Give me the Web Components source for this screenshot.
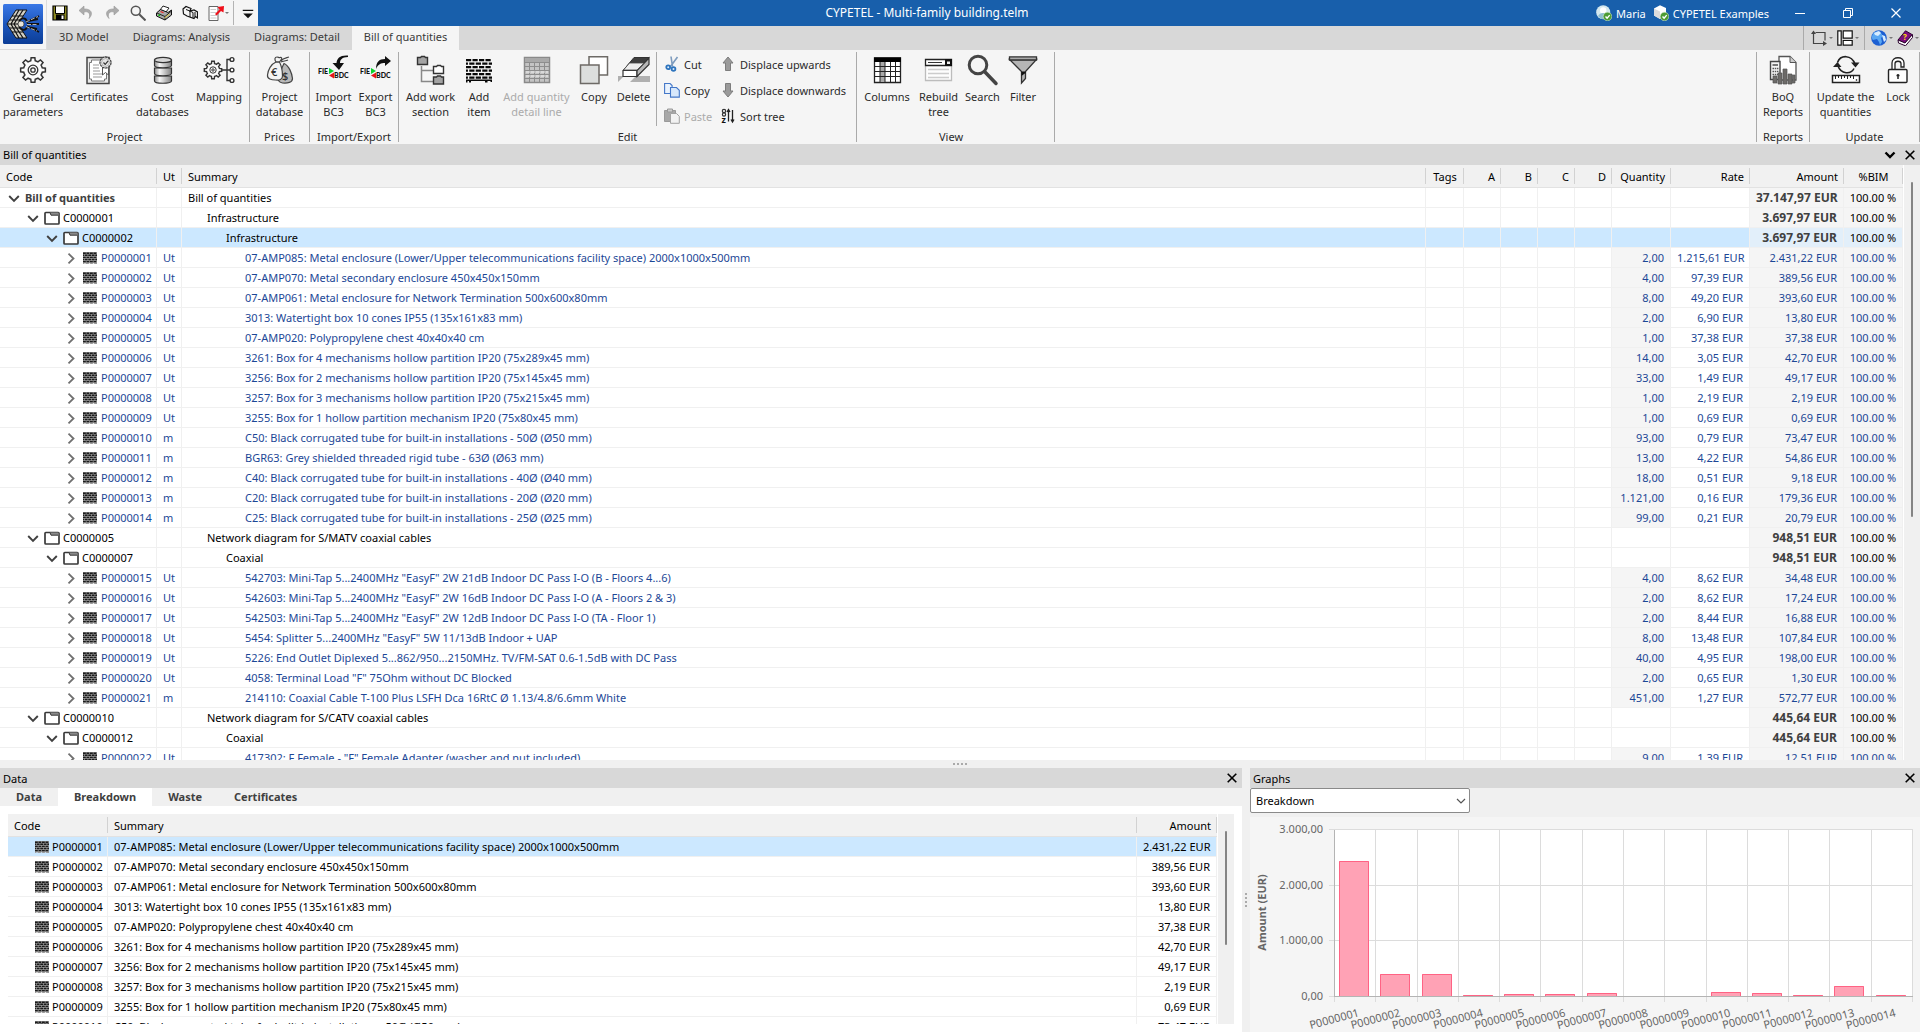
<!DOCTYPE html>
<html lang="en">
<head>
<meta charset="utf-8">
<title>CYPETEL - Multi-family building.telm</title>
<style>
html, body { margin: 0; height: 100%; }
body { font: 11px/15px "Noto Sans", "Open Sans", sans-serif; color: #000; overflow: hidden; }
</style>
</head>
<body>
<cy-app></cy-app>

<script>
const RESET = `
  *, *::before, *::after { box-sizing: border-box; }
  button { font: inherit; color: inherit; border: 0; padding: 0; margin: 0; background: none; text-align: inherit; }
`;

class CyElement extends HTMLElement {
  constructor() {
    super();
    this.attachShadow({ mode: 'open' });
  }
  connectedCallback() {
    this.shadowRoot.innerHTML = `<style>${RESET}${this.styles()}</style>${this.markup()}`;
    this.ready();
  }
  styles() { return ''; }
  markup() { return '<slot></slot>'; }
  ready() {}
}

/* ---------- icons ---------- */

function gear(cx, cy, outer, inner, teeth) {
  const step = Math.PI * 2 / teeth;
  let d = '';
  for (let i = 0; i < teeth; i++) {
    const a = i * step - Math.PI / 2;
    [[-0.3, inner], [-0.19, outer], [0.19, outer], [0.3, inner]].forEach(([k, r], j) => {
      const x = (cx + Math.cos(a + k * step) * r).toFixed(2);
      const y = (cy + Math.sin(a + k * step) * r).toFixed(2);
      d += j === 0 && i > 0 ? `A${inner} ${inner} 0 0 1 ${x} ${y}` : `${d ? 'L' : 'M'}${x} ${y}`;
    });
  }
  return d + 'Z';
}

function bricks(x, y, w, h, rows, cols, gap) {
  const rowH = h / rows, colW = w / cols;
  let d = '';
  for (let r = 0; r < rows; r++) {
    const shift = r % 2 ? colW / 2 : 0;
    for (let c = -1; c <= cols; c++) {
      const x0 = Math.max(x, x + c * colW + shift);
      const x1 = Math.min(x + w, x + (c + 1) * colW + shift - gap);
      if (x1 > x0) d += `M${x0} ${y + r * rowH}H${x1}V${y + (r + 1) * rowH - gap}H${x0}Z`;
    }
  }
  return d;
}

const fieLogo = `
  <g font-family="Lato, sans-serif" font-weight="900" font-size="7" fill="#111">
    <text x="0" y="20">FIE</text><text x="16" y="24">BDC</text>
  </g>
  <path d="M11 14l5 3-5 3z" fill="#0bd32a"/><path d="M16 18.500l-5 3 5 3z" fill="#e8121a"/>`;

const ICONS = {
  gear: ['0 0 32 32', `<g fill="none" stroke="#333" stroke-width="1.500"><path fill="#fbfbfb" d="${gear(16, 16, 12.5, 9.5, 8)}"/><circle cx="16" cy="16" r="4.800" stroke-width="1.300"/><circle cx="16" cy="16" r="2.200" stroke-width="1.300"/></g>`],
  certificate: ['0 0 32 32', `<path d="M4 3.500h22v26H4z" fill="#e9e9e9" stroke="#444" stroke-width="1.500"/><path d="M8.500 6h13v2.500h2V25h-2v2h-13v-2h-2V8.500h2z" fill="#fff" stroke="#777"/><path d="M10 11h6M10 14h6M10 17h7M10 20h9M10 23h9" stroke="#999"/><path d="M19.500 12v9l3-2.500 3 2.500v-9z" fill="#fff" stroke="#555"/><circle cx="22.500" cy="8.500" r="5.500" fill="#fff" stroke="#444" stroke-width="1.300" stroke-dasharray="2.500 .6"/><circle cx="22.500" cy="8.500" r="4" fill="#e4e4e4" stroke="#888" stroke-width=".6"/><path d="M20.500 8.500l1.700 1.800 3-3.500" fill="none" stroke="#333" stroke-width="1.200"/>`],
  database: ['0 0 32 32', `<defs><linearGradient id="g"><stop offset="0" stop-color="#8e8e8e"/><stop offset=".3" stop-color="#f6f6f6"/><stop offset="1" stop-color="#828282"/></linearGradient></defs><g stroke="#333" stroke-width="1.200"><path d="M7.500 22v5c0 3 17 3 17 0v-5z" fill="url(#g)"/><path d="M7.500 14v5.500c0 3 17 3 17 0V14z" fill="url(#g)"/><path d="M7.500 6v5.500c0 3 17 3 17 0V6z" fill="url(#g)"/><ellipse cx="16" cy="6" rx="8.500" ry="2.600" fill="#d6d6d6"/></g>`],
  mapping: ['0 0 32 32', `<g fill="none" stroke="#333" stroke-width="1.400"><path fill="#fbfbfb" d="${gear(10, 16, 8.8, 6.6, 8)}"/><circle cx="10" cy="16" r="3.200" stroke-width="1"/><circle cx="10" cy="16" r="1.200" stroke-width="1"/><path d="M19 16h8M29 5.500h-5v21h4"/><g fill="#fff"><circle cx="29" cy="5.500" r="1.900"/><circle cx="29" cy="16" r="1.900"/><circle cx="29" cy="26.500" r="1.900"/></g></g>`],
  money: ['0 0 32 32', `<g stroke="#444" stroke-width="1.200"><path d="M20 9.500c5 2 8 10 8.500 15 0 4-5 5-10 4.500-4-1-5-3-4-6 2-5 3-9 5.500-13.500z" fill="#b9b9b9"/><path d="M12 8c-5 2-8 8-8.500 13-.5 4 4 5 8 5 4 .5 7-.5 7-4 0-5-1-10-3-14z" fill="#f4f4f4"/><path d="M12 8c-2-3-1-5 1-5 1.500 0 2 1 3 .5 1.500-.5 2.500 1 1 2.500l-1.500 2zM17 7c2-3 5-3 8-4M17 8c2-1 5-1 7-2" fill="none"/></g><g font-family="Open Sans, sans-serif" font-weight="600" fill="#333"><text x="7" y="22" font-size="11">€</text><text x="18" y="26" font-size="11">$</text></g>`],
  importbc3: ['0 0 32 32', `<path d="M30 1.500C22 1 19 4 18.500 9h-4l6.500 7 5-7h-4C22 6 24 3 30 3z" fill="#111"/>${fieLogo}`],
  exportbc3: ['0 0 32 32', `<path d="M16 15c0-7 3-10 9-10V2l6 5-6 5V9c-4 0-7 1-9 6z" fill="#111"/>${fieLogo}`],
  worksection: ['0 0 32 32', `<path d="M6.500 12v15.500H18M6.500 16.500H18" fill="none" stroke="#888" stroke-width="1.500"/><g stroke="#333" stroke-width="1.400"><path d="M2.500 3.500h3l1-1h3l1 1h2v7h-10z" fill="#a3a3a3"/><path d="M18.500 12.500h3l1-1h3l1 1h2v7h-10z" fill="#fff"/><path d="M18.500 23h3l1-1h3l1 1h2v7h-10z" fill="#a3a3a3"/></g>`],
  bricks: ['0 0 32 32', `<path fill="#080808" d="${bricks(3, 5, 26, 21, 6, 4, 1.3)}M3 25.500h26V28h-1.500v-1h-3v1.500H22V27H8v1.500H6V27H4.500v1.500H3z"/>`],
  detailline: ['0 0 32 32', `<path d="M3.500 3.500h25v25h-25z" fill="#c4c4c4" stroke="#8a8a8a" stroke-width="1.500"/><path d="M4 4h24v4H4z" fill="#a9a9a9"/><path d="M4 8.500h24M4 12.500h24M4 16.500h24M4 20.500h24M4 24.500h24M8.500 9v19M13.500 9v19M18.500 9v19M23.500 9v19" stroke="#8d8d8d"/><path d="M5 18h22M5 22h22" stroke="#eee" stroke-dasharray="4 1"/>`],
  copybig: ['0 0 32 32', `<g stroke="#6d6a66" stroke-width="1.500"><path d="M11 2.800h18.500V21H11z" fill="#fff"/><path d="M2.500 11H21v18.500H2.500z" fill="#dcdedd"/></g>`],
  eraser: ['0 0 32 32', `<path d="M0 22h6l-6 6zM18 22h14v6H12z" fill="#b0b0b0"/><path d="M5.500 16L16 3.500h15L19 16z" fill="#3f3f3f" stroke="#333"/><path d="M5 16.500h14v6H5z" fill="#fff" stroke="#333" stroke-width="1.200"/><path d="M19 16.500L31 4v6.500l-12 12z" fill="#b7b7b7" stroke="#333" stroke-width="1.200"/><path d="M5.500 16l6-7H26l-7 7z" fill="#eee" stroke="#444" stroke-width=".8"/>`],
  columns: ['0 0 32 32', `<path d="M3.500 4h26v24.500h-26z" fill="#fff" stroke="#222" stroke-width="1.300"/><path d="M3 3.500h27V8H3z" fill="#000"/><path d="M9 8h5v20H9z" fill="#aaa"/><path d="M3 12.500h27M3 17.500h27M3 22.500h27M9 8v20M14 8v20M19.500 8v20M24.500 8v20" stroke="#222"/>`],
  rebuild: ['0 0 32 32', `<path d="M2.500 12v14.500h26V12" fill="#fdfdfd" stroke="#bcbcbc" stroke-width="1.300"/><path d="M5 15.500h21M5 19.500h21M5 23.500h21" stroke="#ccc" stroke-width="1.300"/><path d="M2.500 5.500h26v6h-26z" fill="#fff" stroke="#222" stroke-width="1.300"/><path d="M22 5h7v7h-7z" fill="#111"/><path d="M5 8.500h14" stroke="#333"/><path d="M24 7.500h3v2.500h-3z" fill="#eee"/>`],
  searchbig: ['0 0 32 32', `<circle cx="11" cy="11" r="8.800" fill="none" stroke="#444" stroke-width="3"/><path d="M17.500 17.500L29 29.500" stroke="#444" stroke-width="3.500" stroke-linecap="round"/>`],
  filter: ['0 0 32 32', `<path d="M2.500 5.500h27L18.500 17.500v7l-4 4.500V17.500z" fill="#b5b5b5" stroke="#333" stroke-width="1.300"/><path d="M2.500 2.800h27v3.200h-27z" fill="#aaa" stroke="#333" stroke-width="1.300"/><path d="M14.500 17.500h4v1.500l-4 3z" fill="#111"/>`],
  reports: ['0 0 32 32', `<path d="M12 2.500h11l6 6V26H12z" fill="#fff" stroke="#555" stroke-width="1.300"/><path d="M23 2.500v6h6" fill="#ccc" stroke="#555"/><path d="M3.500 7.500h9.500v18H3.500z" fill="#f4f4f4" stroke="#444" stroke-width="1.400"/><path d="M5.500 10h5.500v2H5.500z" fill="#777"/><path d="M5.500 14.500h6M5.500 17.500h6M5.500 20.500h6" stroke="#555" stroke-width="1.500" stroke-dasharray="1.500 .7"/><g fill="#6c6a68" stroke="#555" stroke-width=".7"><path d="M6 22h4v7H6zM11 19h4v11h-4zM16 15h4v15h-4zM21 20h4v10h-4zM25.500 21h2.500v8h-2.500z"/></g>`],
  update: ['0 0 32 32', `<g fill="none" stroke="#222" stroke-width="1.600"><path d="M7.500 8.500c3-8 14-8 17.500 1.500M24 14.500c-3 6-13 6-16-2.500"/></g><path d="M21 8.500h8.500l-4 5zM3 13h8.500l-4-5z" fill="#222"/><path d="M2.500 21.500h27v7h-27z" fill="#fff" stroke="#222" stroke-width="1.500"/><path d="M5.500 22v3M8.500 22v2M11.500 22v3M14.500 22v2M17.500 22v3M20.500 22v2M23.500 22v3" stroke="#222"/><circle cx="26.500" cy="26" r=".8"/>`],
  lock: ['0 0 32 32', `<path d="M10 15.500V9c0-7 12-7 12 0v4h-3V9.500c0-3-6-3-6 0v6" fill="#fff" stroke="#222" stroke-width="1.300"/><rect x="6.500" y="15.500" width="18.500" height="13" rx="1" fill="#fff" stroke="#222" stroke-width="1.400"/><path d="M16 20v5M14.500 21.500h3" stroke="#222" stroke-width="1.500"/>`],
  cut: ['0 0 16 16', `<path d="M13.500 1L6.500 10.500M7 .5l1.500 10" stroke="#7d9bbd" stroke-width="1.600"/><g fill="#dcebfa" stroke="#2e74bd" stroke-width="1.800"><circle cx="4.200" cy="11.200" r="1.900"/><circle cx="9.500" cy="13" r="1.900"/></g>`],
  copy: ['0 0 16 16', `<g fill="#eaf3fd" stroke="#4377c8" stroke-width="1.100"><path d="M.6 1.500h5.500l2 2v8H.6z"/><path d="M6.500 5.500h6l2.800 2.800v6.800H6.500z" fill="#d7e8fb"/></g>`],
  paste: ['0 0 16 16', `<path d="M.5 2.500h11v11H.5z" fill="#a8a8a8" stroke="#9a9a9a"/><path d="M3.500 1h5v3h-5z" fill="#ccc" stroke="#999"/><path d="M6.500 5.500h6l2.800 2.800v7H6.500z" fill="#f2f2f2" stroke="#a2a2a2"/>`],
  up: ['0 0 16 16', `<path d="M8 1l5 6h-2.500v7.500h-5V7H3z" fill="#9a9a9a" stroke="#7d7d7d"/>`],
  down: ['0 0 16 16', `<path d="M8 15l5-6h-2.500V1.500h-5V9H3z" fill="#9a9a9a" stroke="#7d7d7d"/>`],
  sort: ['0 0 16 16', `<g fill="none" stroke="#333" stroke-width="1.200"><circle cx="4" cy="3" r="1.700"/><circle cx="4" cy="6.500" r="1.600"/></g><text x="1.500" y="15" font-family="Open Sans, sans-serif" font-weight="700" font-size="9" fill="#111">z</text><path d="M8.500 2v11.500M7 4l1.500-2.500L10 4M12.500 2v11.500M11 11.500l1.500 2.500 1.500-2.500" fill="none" stroke="#222" stroke-width="1.300"/>`],
  save: ['0 0 16 16', `<path d="M1 1h14v14H1z" fill="#8a8720" stroke="#000" stroke-width="1.200"/><path d="M4 1.500h8V8H4z" fill="#fff"/><path d="M4 9.500h8.500V15H4z" fill="#000"/><path d="M9.500 10.500h2V14h-2z" fill="#fff"/><path d="M3.500 1v7.500h9V1" fill="none" stroke="#000"/>`],
  undo: ['0 0 16 16', `<path d="M6 1L1 5.500 6 10V7c4-1 7 1 5 6.500 5-5 2-10-5-9.500z" fill="#ababab" stroke="#999" stroke-width=".6"/>`],
  redo: ['0 0 16 16', `<path d="M10 1l5 4.500L10 10V7C6 6 3 8 5 13.500 0 8.500 3 3.500 10 4z" fill="#ababab" stroke="#999" stroke-width=".6"/>`],
  search: ['0 0 16 16', `<circle cx="5.800" cy="5.800" r="4.500" fill="none" stroke="#555" stroke-width="1.500"/><path d="M9.200 9.200L15.500 15.500" stroke="#555" stroke-width="2"/>`],
  print: ['0 0 16 16', `<path d="M4 5l3-4 6 2-3 4z" fill="#fff" stroke="#222"/><path d="M.5 8l4-3.500L12 7.500 15.500 5v5L9 15 .5 11z" fill="#a8a8a8" stroke="#111"/><path d="M.8 8L9 11.500 15.500 6M9 11.500V15" fill="none" stroke="#222"/><path d="M2.500 10l1.500.6" stroke="#0c0" stroke-width="1.500"/><path d="M4.500 6.500l3 1.200" stroke="#e22" stroke-width="1.200"/><path d="M8.500 13l5-4" stroke="#e8d64a"/>`],
  printsetup: ['0 0 16 16', `<path d="M1 4l3-2.500 5 2L8 6l4-1 3.500 2v6l-2-1.500-1.500 2L5 11 1.500 9z" fill="#f4f4f4" stroke="#111" stroke-width="1.200"/><path d="M8 6v6M4 4.500L8 6l3 1.500V13M13 7v5" stroke="#111" fill="none"/>`],
  exportdoc: ['0 0 16 16', `<path d="M1 1.500h9v14H1z" fill="#fff" stroke="#666"/><path d="M2.500 4.500H8M2.500 7.500h6M2.500 10.500h6M2.500 13h6" stroke="#ccc"/><path d="M7 9l4.500-4.500L9.500 2l6.500-1-.5 6.500L13 6 8.500 10.500z" fill="#f0101a"/>`],
  customize: ['0 0 16 16', `<path d="M2 5h12" stroke="#111" stroke-width="1.400"/><path d="M2.500 8.500h11L8 14z" fill="#111"/>`],
  caret: ['0 0 4 4', `<path d="M0 1h4L2 3z" fill="#777"/>`],
  frame: ['0 0 16 16', `<path d="M2.500 2v11.500H14M4.500 2.500h9.500v8" fill="none" stroke="#444" stroke-width="1.200"/><path d="M0 4L2.500.5 5 4zM12 11l4 2.500L12 16z" fill="#444"/>`],
  layout: ['0 0 16 16', `<g fill="#fff" stroke="#111" stroke-width="1.200"><path d="M.8.8h3.400v14.400H.8zM6.200.8h9v7.400h-9zM6.200 10.500h9v4.700h-9z"/></g>`],
  globe: ['0 0 16 16', `<circle cx="8" cy="8" r="7.800" fill="#1c5fd2"/><path d="M4 2C1 4 0 8 2 10l4-1 2 3 1 3 2-3-1-4 2-2-2-3-3-2z" fill="#5aa7f2"/><path d="M3 3l5-2 2 2-3 3-3-1zM11 5l3 1 1 4-2 2-1-3z" fill="#d7ecff"/>`],
  book: ['0 0 16 16', `<path d="M1 10L8.500.8 15 4.500 8 13z" fill="#7d0e7c" stroke="#2c0430"/><path d="M1 10l7 3 7.500-8.500v3L8.500 15.800 1.500 13z" fill="#fff" stroke="#2c0430"/><text x="6" y="10" font-family="Open Sans, sans-serif" font-weight="700" font-size="8" fill="#ffe100">?</text>`],
  user: ['0 0 16 16', `<circle cx="7.200" cy="7.200" r="7" fill="#d4e8ee"/><circle cx="7.200" cy="5.500" r="3.200" fill="#fff"/><path d="M2 11c2-4 8-4 10 0l-3 3H5z" fill="#8fbfd0"/><circle cx="11.500" cy="11.500" r="4.300" fill="#4d9c34" stroke="#d5e8ce" stroke-width=".6"/><path d="M9.500 11.500l1.600 1.600 2.600-3" fill="none" stroke="#fff" stroke-width="1.400"/>`],
  box: ['0 0 16 16', `<path d="M7 .3l6 2.600v7L7 14 1 10.500v-7z" fill="#fff"/><path d="M1 3.500L7 6.500V14l-6-3.500z" fill="#dcdcdc"/><circle cx="11.500" cy="11.500" r="4.300" fill="#4d9c34" stroke="#d5e8ce" stroke-width=".6"/><path d="M9.500 11.500l1.600 1.600 2.600-3" fill="none" stroke="#fff" stroke-width="1.400"/>`],
  minimize: ['0 0 10 10', `<path d="M0 5.500h10" stroke="#fff"/>`],
  restore: ['0 0 10 10', `<path d="M.5 2.500h7v7h-7zM2.500 2.500v-2h7v7h-2" fill="none" stroke="#fff"/>`],
  closewin: ['0 0 10 10', `<path d="M.5.5l9 9M9.500.5l-9 9" stroke="#fff" stroke-width="1.200"/>`],
  close: ['0 0 10 10', `<path d="M.7.7l8.600 8.600M9.300.7L.7 9.300" stroke="#000" stroke-width="1.600"/>`],
  menu: ['0 0 12 12', `<path d="M1.500 3.500L6 8l4.500-4.500" fill="none" stroke="#000" stroke-width="2.400"/>`],
  expanded: ['0 0 12 12', `<path d="M1.200 4L6 8.800 10.800 4" fill="none" stroke="#404040" stroke-width="1.900"/>`],
  collapsed: ['0 0 12 12', `<path d="M3.500 1.700L8.500 6.500l-5 4.800" fill="none" stroke="#707070" stroke-width="1.800"/>`],
  folder: ['0 0 16 14', `<rect x="1" y="1.500" width="14" height="11.500" rx=".8" fill="#fff" stroke="#3a3a3a" stroke-width="1.700"/><path d="M6 1.500l1 2.700h7.500V1.500z" fill="#8a8a8a"/><path d="M6 1.500l1 2.700h7" fill="none" stroke="#3a3a3a"/>`],
  item: ['0 0 14 12', `<path d="M0 0h14v12h-2.500l-1-1-1 1h-2l-1-1-1 1H3l-1-1-1 1H0z" fill="#9a9a9a"/><path fill="#1b1b1b" d="${bricks(0, 0.5, 14, 10.5, 5, 4, 0.7)}"/>`],
  select: ['0 0 10 10', `<path d="M1 3l4 4 4-4" fill="none" stroke="#555" stroke-width="1.200"/>`],
  app: ['0 0 40 40', `<defs><linearGradient id="a" x2="0" y2="1"><stop offset="0" stop-color="#3a78e6"/><stop offset=".5" stop-color="#1c56bd"/><stop offset="1" stop-color="#0c3d96"/></linearGradient></defs><rect width="40" height="40" rx="1.500" fill="url(#a)"/><path d="M13 6h11l-9 14 9 14H13L4 20z" fill="#d3d0c4" stroke="#111"/><path d="M9 12h11M7 16h11M5 20h10M7 24h11M9 28h11M16 6L8 20l8 14M20 6l-9 14 9 14" fill="none" stroke="#111" stroke-width="1.200"/><path d="M16 19c1-6 7-6 8-1l12-6M24 20h12M24 22l12 6M25 17l10-2M25 23l9 2M16 21c1 6 7 6 8 2" fill="none" stroke="#111" stroke-width="1.800"/><path d="M23 18l12-5.500M24 20.500h11M23 22.500l11 4.500" stroke="#ddd" stroke-width=".8" stroke-dasharray="4 1.500"/><circle cx="18" cy="20" r="3" fill="#e6e3d8" stroke="#333" stroke-width=".7"/>`],
};

customElements.define('cy-icon', class extends CyElement {
  styles() {
    const size = this.getAttribute('size') || '16';
    return `:host { display: inline-block; flex: none; width: ${size}px; } svg { display: block; width: 100%; height: auto; }`;
  }
  markup() {
    const [box, art] = ICONS[this.getAttribute('name')];
    return `<svg viewBox="${box}" aria-hidden="true">${art}</svg>`;
  }
});

/* ---------- title bar ---------- */

customElements.define('cy-title-bar', class extends CyElement {
  styles() {
    return `
      :host { display: flex; height: 26px; background: #185fab; color: #fff; }
      .quick { display: flex; align-items: center; width: 211px; background: #f5f5f5; }
      .quick button { width: 26px; height: 26px; display: grid; place-items: center; }
      .quick .last { display: flex; width: 30px; gap: 1px; padding-left: 5px; align-items: center; }
      .quick .sep { width: 1px; height: 24px; margin-right: 4px; background: #b4b4b4; }
      .quick .more { width: 20px; }
      h1 { flex: 1; margin: 0; font-size: 12px; font-weight: 400; line-height: 26px; text-align: center; white-space: nowrap; }
      .account { display: flex; align-items: center; gap: 4px; margin-right: 7px; }
      .win { display: flex; }
      .win button { width: 48px; height: 26px; display: grid; place-items: center; }
    `;
  }
  markup() {
    const quick = [['save', 'Save'], ['undo', 'Undo'], ['redo', 'Redo'], ['search', 'Search'], ['print', 'Print'], ['printsetup', 'Print setup']];
    return `
      <div class="quick">
        ${quick.map(([n, l]) => `<button aria-label="${l}"><cy-icon name="${n}"></cy-icon></button>`).join('')}
        <button class="last" aria-label="Export"><cy-icon name="exportdoc"></cy-icon><cy-icon name="caret" size="4"></cy-icon></button>
        <span class="sep"></span>
        <button class="more" aria-label="Customize"><cy-icon name="customize" size="14"></cy-icon></button>
      </div>
      <h1>CYPETEL - Multi-family building.telm</h1>
      <button class="account"><cy-icon name="user"></cy-icon>Maria</button>
      <button class="account"><cy-icon name="box"></cy-icon>CYPETEL Examples</button>
      <div class="win">
        <button aria-label="Minimize"><cy-icon name="minimize" size="10"></cy-icon></button>
        <button aria-label="Restore"><cy-icon name="restore" size="10"></cy-icon></button>
        <button aria-label="Close"><cy-icon name="closewin" size="10"></cy-icon></button>
      </div>`;
  }
});

/* ---------- ribbon ---------- */

customElements.define('cy-ribbon-tabs', class extends CyElement {
  styles() {
    return `
      :host { display: flex; height: 24px; background: #d8d8d8; color: #3a3a3a; }
      [role=tablist] { display: flex; flex: 1; }
      [role=tab] { padding: 0 12px 4px; white-space: nowrap; }
      [role=tab][aria-selected=true] { background: #f5f5f5; }
      .tools { display: flex; align-items: center; gap: 4px; border-left: 1px solid #aaa; padding: 0 5px 0 7px; }
      .tools:last-child { padding: 0 1px 0 6px; }
      .tools button { display: flex; align-items: center; gap: 2px; width: 22px; }
    `;
  }
  markup() {
    const tabs = ['3D Model', 'Diagrams: Analysis', 'Diagrams: Detail', 'Bill of quantities'];
    const tool = (n, l) => `<button aria-label="${l}"><cy-icon name="${n}"></cy-icon><cy-icon name="caret" size="4"></cy-icon></button>`;
    return `
      <div role="tablist">${tabs.map((t, i) => `<button role="tab" aria-selected="${i === 3}">${t}</button>`).join('')}</div>
      <div class="tools">${tool('frame', 'Frame')}${tool('layout', 'Layout')}</div>
      <div class="tools">${tool('globe', 'Web')}${tool('book', 'Help')}</div>`;
  }
});

customElements.define('cy-ribbon-group', class extends CyElement {
  styles() {
    return `
      :host { display: flex; flex-direction: column; padding: 0 3px 0 2px; background: linear-gradient(#aaa, #aaa) right 1px / 1px 90px no-repeat; }
      .body { display: flex; flex: 1; align-items: flex-start; }
      .title { text-align: center; line-height: 14px; white-space: nowrap; }
    `;
  }
  markup() { return `<div class="body"><slot></slot></div><div class="title">${this.getAttribute('label')}</div>`; }
});

customElements.define('cy-ribbon-button', class extends CyElement {
  styles() {
    return `
      :host { display: block; width: ${this.getAttribute('width')}px; }
      button { display: flex; flex-direction: column; align-items: center; width: 100%; padding-top: 3px; gap: 3px; text-align: center; white-space: pre; }
      button:disabled { color: #ababab; }
    `;
  }
  markup() {
    return `<button ${this.hasAttribute('disabled') ? 'disabled' : ''}><cy-icon name="${this.getAttribute('icon')}" size="32"></cy-icon><span><slot></slot></span></button>`;
  }
});

customElements.define('cy-ribbon-item', class extends CyElement {
  styles() {
    return `
      :host { display: block; }
      button { display: flex; align-items: center; gap: 4px; height: 26px; white-space: nowrap; }
      button:disabled { color: #ababab; }
    `;
  }
  markup() {
    return `<button ${this.hasAttribute('disabled') ? 'disabled' : ''}><cy-icon name="${this.getAttribute('icon')}"></cy-icon><slot></slot></button>`;
  }
});

customElements.define('cy-ribbon', class extends CyElement {
  styles() {
    return `
      :host { display: flex; height: 94px; padding-top: 1px; background: #f5f5f5; color: #2b2b2b; }
      .spacer { flex: 1; background: linear-gradient(#aaa, #aaa) right 1px / 1px 90px no-repeat; }
      .divider { width: 1px; height: 74px; margin: 1px 7px 0 2px; background: #aaa; }
      .stack { display: flex; flex-direction: column; width: 56px; }
      .stack + .stack { width: 134px; }
      .view { padding-right: 12px; }
    `;
  }
  markup() {
    const b = (icon, width, label, extra = '') => `<cy-ribbon-button icon="${icon}" width="${width}" ${extra}>${label}</cy-ribbon-button>`;
    return `
      <cy-ribbon-group label="Project">
        ${b('gear', 62, 'General\nparameters')}${b('certificate', 70, 'Certificates')}${b('database', 57, 'Cost\ndatabases')}${b('mapping', 56, 'Mapping')}
      </cy-ribbon-group>
      <cy-ribbon-group label="Prices">${b('money', 55, 'Project\ndatabase')}</cy-ribbon-group>
      <cy-ribbon-group label="Import/Export">${b('importbc3', 43, 'Import\nBC3')}${b('exportbc3', 41, 'Export\nBC3')}</cy-ribbon-group>
      <cy-ribbon-group label="Edit">
        ${b('worksection', 59, 'Add work\nsection')}${b('bricks', 38, 'Add\nitem')}${b('detailline', 77, 'Add quantity\ndetail line', 'disabled')}${b('copybig', 38, 'Copy')}${b('eraser', 41, 'Delete')}
        <div class="divider"></div>
        <div class="stack">
          <cy-ribbon-item icon="cut">Cut</cy-ribbon-item>
          <cy-ribbon-item icon="copy">Copy</cy-ribbon-item>
          <cy-ribbon-item icon="paste" disabled>Paste</cy-ribbon-item>
        </div>
        <div class="stack">
          <cy-ribbon-item icon="up">Displace upwards</cy-ribbon-item>
          <cy-ribbon-item icon="down">Displace downwards</cy-ribbon-item>
          <cy-ribbon-item icon="sort">Sort tree</cy-ribbon-item>
        </div>
      </cy-ribbon-group>
      <cy-ribbon-group label="View" class="view">
        ${b('columns', 56, 'Columns')}${b('rebuild', 47, 'Rebuild\ntree')}${b('searchbig', 41, 'Search')}${b('filter', 40, 'Filter')}
      </cy-ribbon-group>
      <div class="spacer"></div>
      <cy-ribbon-group label="Reports">${b('reports', 48, 'BoQ\nReports')}</cy-ribbon-group>
      <cy-ribbon-group label="Update">${b('update', 67, 'Update the\nquantities')}${b('lock', 38, 'Lock')}</cy-ribbon-group>`;
  }
});

/* ---------- dock panels ---------- */

customElements.define('cy-panel', class extends CyElement {
  styles() {
    return `
      :host { display: flex; flex-direction: column; min-width: 0; min-height: 0; background: #f0f0f0; }
      header { display: flex; align-items: center; flex: none; gap: 9px; height: ${this.getAttribute('bar') || 20}px; padding: 0 5px 0 3px; background: #d8d8d8; }
      h2 { flex: 1; margin: 0; font-size: 11px; font-weight: 400; }
      header button { display: flex; }
    `;
  }
  markup() {
    return `
      <header><h2>${this.getAttribute('label')}</h2>
        ${this.hasAttribute('menu') ? '<button aria-label="Panel menu"><cy-icon name="menu" size="12"></cy-icon></button>' : ''}
        <button aria-label="Close panel"><cy-icon name="close" size="10"></cy-icon></button>
      </header><slot></slot>`;
  }
});

customElements.define('cy-scroll-thumb', class extends CyElement {
  styles() {
    return `
      :host { display: flex; flex-direction: column; align-items: center; flex: none; width: 17px; padding-top: 17px; background: #f0f0f0; border-left: 1px solid #fff; }
      div { width: 2px; height: ${this.getAttribute('size')}; background: #858585; border-radius: 1px; }
    `;
  }
  markup() { return '<div></div>'; }
});

customElements.define('cy-splitter', class extends CyElement {
  styles() {
    const v = this.hasAttribute('vertical');
    return `
      :host { display: flex; flex: none; align-items: center; justify-content: center; gap: 2px; background: #f0f0f0;
        ${v ? 'width: 8px; flex-direction: column;' : 'height: 8px;'} }
      i { width: 2px; height: 2px; background: #aaa; }
    `;
  }
  markup() { return '<i></i><i></i><i></i><i></i>'; }
});

/* ---------- data ---------- */

const PARTS = [
  ['07-AMP085: Metal enclosure (Lower/Upper telecommunications facility space) 2000x1000x500mm', 'Ut', '2,00', '1.215,61', '2.431,22'],
  ['07-AMP070: Metal secondary enclosure 450x450x150mm', 'Ut', '4,00', '97,39', '389,56'],
  ['07-AMP061: Metal enclosure for Network Termination 500x600x80mm', 'Ut', '8,00', '49,20', '393,60'],
  ['3013: Watertight box 10 cones IP55 (135x161x83 mm)', 'Ut', '2,00', '6,90', '13,80'],
  ['07-AMP020: Polypropylene chest 40x40x40 cm', 'Ut', '1,00', '37,38', '37,38'],
  ['3261: Box for 4 mechanisms hollow partition IP20 (75x289x45 mm)', 'Ut', '14,00', '3,05', '42,70'],
  ['3256: Box for 2 mechanisms hollow partition IP20 (75x145x45 mm)', 'Ut', '33,00', '1,49', '49,17'],
  ['3257: Box for 3 mechanisms hollow partition IP20 (75x215x45 mm)', 'Ut', '1,00', '2,19', '2,19'],
  ['3255: Box for 1 hollow partition mechanism IP20 (75x80x45 mm)', 'Ut', '1,00', '0,69', '0,69'],
  ['C50: Black corrugated tube for built-in installations - 50Ø (Ø50 mm)', 'm', '93,00', '0,79', '73,47'],
  ['BGR63: Grey shielded threaded rigid tube - 63Ø (Ø63 mm)', 'm', '13,00', '4,22', '54,86'],
  ['C40: Black corrugated tube for built-in installations - 40Ø (Ø40 mm)', 'm', '18,00', '0,51', '9,18'],
  ['C20: Black corrugated tube for built-in installations - 20Ø (Ø20 mm)', 'm', '1.121,00', '0,16', '179,36'],
  ['C25: Black corrugated tube for built-in installations - 25Ø (Ø25 mm)', 'm', '99,00', '0,21', '20,79'],
  ['542703: Mini-Tap 5...2400MHz "EasyF" 2W 21dB Indoor DC Pass I-O (B - Floors 4...6)', 'Ut', '4,00', '8,62', '34,48'],
  ['542603: Mini-Tap 5...2400MHz "EasyF" 2W 16dB Indoor DC Pass I-O (A - Floors 2 &amp; 3)', 'Ut', '2,00', '8,62', '17,24'],
  ['542503: Mini-Tap 5...2400MHz "EasyF" 2W 12dB Indoor DC Pass I-O (TA - Floor 1)', 'Ut', '2,00', '8,44', '16,88'],
  ['5454: Splitter 5...2400MHz "EasyF" 5W 11/13dB Indoor + UAP', 'Ut', '8,00', '13,48', '107,84'],
  ['5226: End Outlet Diplexed 5...862/950...2150MHz. TV/FM-SAT 0.6-1.5dB with DC Pass', 'Ut', '40,00', '4,95', '198,00'],
  ['4058: Terminal Load "F" 75Ohm without DC Blocked', 'Ut', '2,00', '0,65', '1,30'],
  ['214110: Coaxial Cable T-100 Plus LSFH Dca 16RtC Ø 1.13/4.8/6.6mm White', 'm', '451,00', '1,27', '572,77'],
  ['417302: F Female - "F" Female Adapter (washer and nut included)', 'Ut', '9,00', '1,39', '12,51'],
].map(([summary, ut, qty, rate, amount], i) => ({ level: 3, code: 'P' + String(i + 1).padStart(7, '0'), summary, ut, qty, rate, amount }));

const section = (level, code, summary, amount, selected) => ({ level, code, summary, amount, selected, section: true });
const TREE = [
  section(0, 'Bill of quantities', 'Bill of quantities', '37.147,97'),
  section(1, 'C0000001', 'Infrastructure', '3.697,97'),
  section(2, 'C0000002', 'Infrastructure', '3.697,97', true),
  ...PARTS.slice(0, 14),
  section(1, 'C0000005', 'Network diagram for S/MATV coaxial cables', '948,51'),
  section(2, 'C0000007', 'Coaxial', '948,51'),
  ...PARTS.slice(14, 21),
  section(1, 'C0000010', 'Network diagram for S/CATV coaxial cables', '445,64'),
  section(2, 'C0000012', 'Coaxial', '445,64'),
  ...PARTS.slice(21),
];

const TABLE = `
  table { width: 100%; table-layout: fixed; border-collapse: separate; border-spacing: 0; background: #fff; }
  tr { height: 20px; }
  td, th { padding: 0 6px; height: 20px; border-right: 1px solid #f0f0f0; border-bottom: 1px solid #f0f0f0; white-space: nowrap; overflow: hidden; font-weight: 400; text-align: left; }
  th { height: 23px; background: linear-gradient(#d2d2d2, #d2d2d2) right 3px / 1px 16px no-repeat #f1f1f1; border-right: 0; border-bottom-color: #e2e2e2; }
  .n { text-align: right; }
  .sel td { background: #cce8ff; }
`;

customElements.define('cy-boq-table', class extends CyElement {
  styles() {
    return `${TABLE}
      :host { display: flex; flex: 1; min-height: 0; overflow: hidden; }
      .grid { flex: 1; min-width: 0; overflow: hidden; }
      .c-code { width: 157px; } .c-ut { width: 25px; } .c-tags { width: 38px; } .c-l { width: 37px; }
      .c-qty { width: 59px; } .c-rate { width: 79px; } .c-amt { width: 94px; } .c-bim { width: 59px; }
      .code { display: flex; align-items: center; padding-left: calc(19px * var(--level)); }
      .code button { display: flex; margin: 0 5px 0 2px; }
      .code cy-icon[name=folder] { margin-right: 3px; }
      .code cy-icon[name=item] { margin: 1px 4px 0 1px; }
      td.sum { padding-left: calc(6px + 19px * var(--level)); }
      .part { color: #1c4796; }
      .part .g, .amt { background: #f5f5f5; }
      .section .amt.n { font-size: 12px; font-weight: 700; color: #404040; }
      .root .code span { font-weight: 700; color: #404040; }
      .sel td.amt { background: #e2effa; }
      th.c { text-align: center; }
      td.bim { text-align: center; padding: 0; }
    `;
  }
  row(r) {
    const cls = [r.section ? 'section' : 'part', r.level === 0 ? 'root' : '', r.selected ? 'sel' : ''].join(' ');
    const icon = r.level === 0 ? '' : r.section ? '<cy-icon name="folder" size="16"></cy-icon>' : '<cy-icon name="item" size="14"></cy-icon>';
    return `<tr class="${cls}" style="--level:${r.level}">
      <td><div class="code"><button aria-label="${r.section ? 'Collapse' : 'Expand'}"><cy-icon name="${r.section ? 'expanded' : 'collapsed'}" size="12"></cy-icon></button>${icon}<span>${r.code}</span></div></td>
      <td>${r.ut || ''}</td><td class="sum">${r.summary}</td>
      <td></td><td></td><td></td><td></td><td></td>
      <td class="n g">${r.qty || ''}</td><td class="n">${r.rate ? r.rate + ' EUR' : ''}</td>
      <td class="n amt">${r.amount} EUR</td><td class="amt bim">100.00 %</td></tr>`;
  }
  markup() {
    return `<div class="grid"><table>
      <thead><tr><th class="c-code">Code</th><th class="c-ut">Ut</th><th>Summary</th><th class="c-tags c">Tags</th>
        <th class="c-l n">A</th><th class="c-l n">B</th><th class="c-l n">C</th><th class="c-l n">D</th>
        <th class="c-qty n">Quantity</th><th class="c-rate n">Rate</th><th class="c-amt n">Amount</th><th class="c-bim c">%BIM</th></tr></thead>
      <tbody>${TREE.map(r => this.row(r)).join('')}</tbody></table></div>
      <cy-scroll-thumb size="58%"></cy-scroll-thumb>`;
  }
});

customElements.define('cy-breakdown', class extends CyElement {
  styles() {
    return `${TABLE}
      :host { display: flex; flex-direction: column; flex: 1; min-height: 0; }
      [role=tablist] { display: flex; flex: none; height: 18px; color: #404040; font-weight: 700; }
      [role=tab] { padding: 0 16px 2px; }
      [aria-selected=true] { background: #fff; }
      .page { display: flex; flex: 1; min-height: 0; padding: 8px; background: #fff; }
      .grid { flex: 1; min-width: 0; overflow: hidden; }
      .c-code { width: 100px; } .c-amt { width: 80px; }
      .code { display: flex; align-items: center; gap: 3px; padding-left: 21px; }
    `;
  }
  markup() {
    const tabs = ['Data', 'Breakdown', 'Waste', 'Certificates'];
    return `
      <div role="tablist">${tabs.map((t, i) => `<button role="tab" aria-selected="${i === 1}">${t}</button>`).join('')}</div>
      <div class="page"><div class="grid"><table>
        <thead><tr><th class="c-code">Code</th><th>Summary</th><th class="c-amt n">Amount</th></tr></thead>
        <tbody>${PARTS.slice(0, 14).map((p, i) => `<tr class="${i ? '' : 'sel'}"><td><div class="code"><cy-icon name="item" size="14"></cy-icon>${p.code}</div></td><td>${p.summary}</td><td class="n">${p.amount} EUR</td></tr>`).join('')}</tbody>
      </table></div><cy-scroll-thumb size="59%"></cy-scroll-thumb></div>`;
  }
});

/* ---------- bar chart ---------- */

customElements.define('cy-select', class extends CyElement {
  styles() {
    return `
      :host { display: grid; width: 220px; height: 25px; align-items: center; }
      select, cy-icon { grid-area: 1 / 1; }
      select { appearance: none; width: 100%; height: 25px; padding: 0 24px 0 5px; font: inherit; color: #000; background: #fff; border: 1px solid #8a8a8a; border-radius: 2px; }
      cy-icon { justify-self: end; margin-right: 4px; pointer-events: none; }
    `;
  }
  markup() { return '<select aria-label="Graph"><option>Breakdown</option></select><cy-icon name="select" size="10"></cy-icon>'; }
});

customElements.define('cy-bar-chart', class extends CyElement {
  styles() {
    return `
      :host { display: block; flex: 1; min-height: 0; overflow: hidden; background: #f5f5f5; }
      svg { display: block; width: 100%; height: 100%; font-size: 11px; }
      .bar { fill: #ffa2b5; } .edge { fill: none; stroke: #ff6384; } text { fill: #666; }
      line { shape-rendering: crispEdges; }
    `;
  }
  markup() { return '<svg role="img" aria-label="Amount (EUR) by item"></svg>'; }
  ready() {
    this.draw();
    new ResizeObserver(() => this.draw()).observe(this);
  }
  draw() {
    const { width: w, height: h } = this.getBoundingClientRect();
    if (!w || !h) return;
    const data = PARTS.slice(0, 14);
    const left = 84, right = Math.round(w) - 8, top = 12, bottom = Math.round(h) - 36, max = 3000;
    const step = (right - left) / data.length, span = bottom - top;
    const line = (x1, y1, x2, y2, c) => `<line x1="${x1 + .5}" y1="${y1 + .5}" x2="${x2 + .5}" y2="${y2 + .5}" stroke="${c}"/>`;
    let s = `<rect x="${left}" y="${top}" width="${right - left}" height="${span}" fill="#fff"/>`;
    ['0,00', '1.000,00', '2.000,00', '3.000,00'].forEach((t, i) => {
      const y = Math.round(bottom - span * i / 3);
      s += line(left - 6, y, right, y, '#dcdcdc') + `<text x="${left - 11}" y="${y + 4}" text-anchor="end">${t}</text>`;
    });
    for (let i = 0; i <= data.length; i++) {
      const x = Math.round(left + step * i);
      s += line(x, top, x, bottom + 5, '#dcdcdc');
    }
    data.forEach((p, i) => {
      const value = parseFloat(p.amount.replace('.', '').replace(',', '.'));
      const bh = Math.round(value / max * span), x = Math.round(left + step * i) + 5, bw = Math.round(step) - 11;
      if (bh) s += `<rect class="bar" x="${x}" y="${bottom - bh}" width="${bw}" height="${bh}"/><path class="edge" d="M${x + .5} ${bottom}V${bottom - bh + .5}H${x + bw - .5}V${bottom}"/>`;
      const tx = left + step * (i + .5) + 5;
      s += `<text x="${tx}" y="${bottom + 20}" text-anchor="end" transform="rotate(-15 ${tx} ${bottom + 20})">${p.code}</text>`;
    });
    s += line(left, top, left, bottom, '#b4b4b4') + line(left, bottom, right, bottom, '#b4b4b4');
    const my = (top + bottom) / 2;
    s += `<text x="16" y="${my}" text-anchor="middle" font-weight="700" transform="rotate(-90 16 ${my})">Amount (EUR)</text>`;
    this.shadowRoot.querySelector('svg').innerHTML = s;
  }
});

/* ---------- application shell ---------- */

customElements.define('cy-app', class extends CyElement {
  styles() {
    return `
      :host { display: flex; flex-direction: column; height: 100vh; background: #f0f0f0; }
      .top { display: flex; flex: none; }
      .brand { width: 47px; height: 50px; padding: 4px 3px; background: #f5f5f5; border: solid #dcdcdc; border-width: 0 1px 1px 0; }
      .bars { flex: 1; min-width: 0; }
      .main { flex: 1; }
      .bottom { display: flex; flex: none; height: 264px; }
      .data { flex: 1242 1 0; } .graphs { flex: 670 1 0; }
      cy-bar-chart { margin-top: 4px; }
      cy-ribbon { flex: none; }
    `;
  }
  markup() {
    return `
      <div class="top">
        <button class="brand" aria-label="CYPETEL"><cy-icon name="app" size="40"></cy-icon></button>
        <div class="bars"><cy-title-bar></cy-title-bar><cy-ribbon-tabs></cy-ribbon-tabs></div>
      </div>
      <cy-ribbon></cy-ribbon>
      <cy-panel class="main" label="Bill of quantities" bar="21" menu><cy-boq-table></cy-boq-table></cy-panel>
      <cy-splitter></cy-splitter>
      <div class="bottom">
        <cy-panel class="data" label="Data"><cy-breakdown></cy-breakdown></cy-panel>
        <cy-splitter vertical></cy-splitter>
        <cy-panel class="graphs" label="Graphs"><cy-select></cy-select><cy-bar-chart></cy-bar-chart></cy-panel>
      </div>`;
  }
});
</script>
</body>
</html>
